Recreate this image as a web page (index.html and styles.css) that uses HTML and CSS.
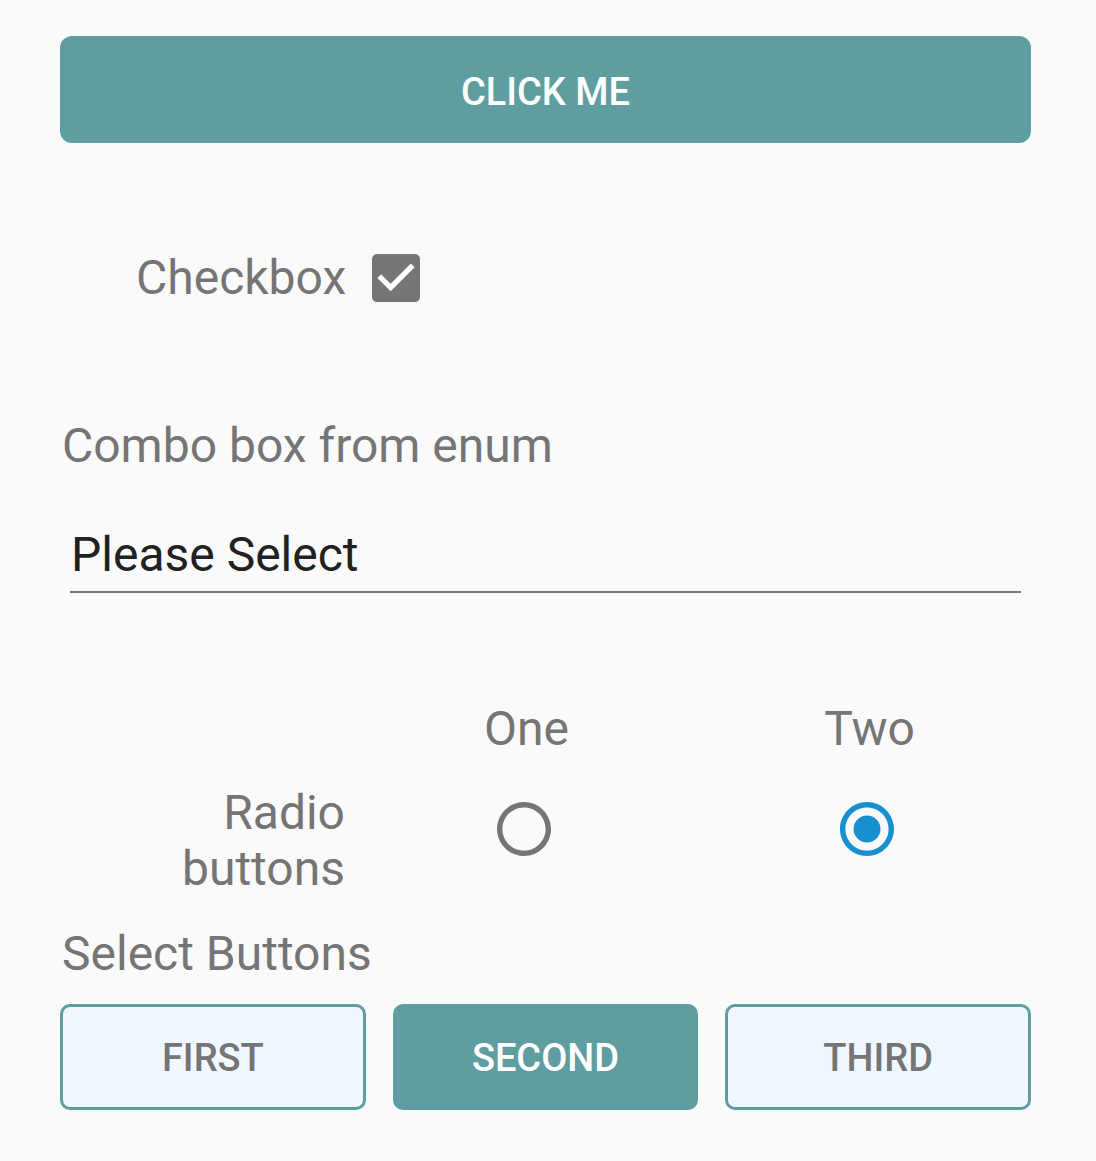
FILE: index.html
```html
<!DOCTYPE html>
<html>
<head>
<meta charset="utf-8">
<link rel="stylesheet" href="styles.css">
</head>
<body>
<main class="page">
  <button class="btn-primary">CLICK ME</button>

  <div class="check-row">
    <span class="label">Checkbox</span>
    <svg class="checkbox" viewBox="3 3 18 18" width="48" height="48">
      <path fill="#757575" d="M19 3H5c-1.11 0-2 .9-2 2v14c0 1.1.89 2 2 2h14c1.11 0 2-.9 2-2V5c0-1.1-.89-2-2-2z"/>
      <path fill="#ffffff" d="M10 17l-5-5 1.41-1.41L10 14.170l7.59-7.59L19 8l-9 9z"/>
    </svg>
  </div>

  <div class="combo-label label">Combo box from enum</div>
  <div class="combo">Please Select</div>

  <div class="radio-grid">
    <div></div>
    <div class="radio-head label">One</div>
    <div class="radio-head label">Two</div>
    <div class="radio-label label">Radio<br>buttons</div>
    <div class="radio-cell">
      <svg viewBox="2 2 20 20" width="54" height="54">
        <path fill="#757575" d="M12 2C6.48 2 2 6.48 2 12s4.48 10 10 10 10-4.480 10-10S17.52 2 12 2zm0 18c-4.42 0-8-3.58-8-8s3.58-8 8-8 8 3.58 8 8-3.58 8-8 8z"/>
      </svg>
    </div>
    <div class="radio-cell">
      <svg viewBox="2 2 20 20" width="54" height="54">
        <path fill="#1890d0" d="M12 2C6.48 2 2 6.48 2 12s4.48 10 10 10 10-4.48 10-10S17.52 2 12 2zm0 18c-4.42 0-8-3.58-8-8s3.58-8 8-8 8 3.58 8 8-3.58 8-8 8z"/>
        <circle fill="#1890d0" cx="12" cy="12" r="5"/>
      </svg>
    </div>
  </div>

  <div class="select-label label">Select Buttons</div>
  <div class="select-row">
    <button class="seg">FIRST</button>
    <button class="seg seg-on">SECOND</button>
    <button class="seg">THIRD</button>
  </div>
</main>
</body>
</html>
```

FILE: styles.css
```css
html, body {
  margin: 0;
  padding: 0;
  background: #fafafa;
}

body {
  font-family: Roboto, "Noto Sans", sans-serif;
}

.page {
  width: 971px;
  margin-left: 60px;
  padding-top: 36px;
  display: flex;
  flex-direction: column;
}

.label {
  font-size: 48px;
  line-height: 56px;
  color: #757575;
}

.btn-primary {
  height: 107px;
  border: none;
  border-radius: 12px;
  background: #5f9ea0;
  color: #ffffff;
  font-family: Roboto, sans-serif;
  font-weight: 500;
  font-size: 38px;
  padding: 5px 0 0 0;
}

.check-row {
  margin-top: 111px;
  padding-left: 76px;
  display: flex;
  align-items: center;
  gap: 26px;
  height: 48px;
}

.checkbox {
  display: block;
}

.combo-label {
  margin-top: 116px;
  padding-left: 2px;
}

.combo {
  margin: 53px 10px 0 10px;
  font-size: 48px;
  line-height: 56px;
  color: #212121;
  padding-left: 1px;
  padding-bottom: 8px;
  border-bottom: 2px solid #7a7a7a;
}

.radio-grid {
  margin-top: 108px;
  display: grid;
  grid-template-columns: 285px 1fr 1fr;
  align-items: start;
}

.radio-head {
  text-align: center;
  padding-left: 20px;
}

.radio-label {
  text-align: right;
  line-height: 56px;
  margin-top: 28px;
}

.radio-cell {
  display: flex;
  justify-content: center;
  padding-left: 14px;
  margin-top: 45px;
}

.radio-cell svg {
  display: block;
}

.select-label {
  margin-top: 29px;
  padding-left: 2px;
}

.select-row {
  margin-top: 22px;
  display: grid;
  grid-template-columns: 1fr 1fr 1fr;
  gap: 27px;
}

.seg {
  height: 106px;
  border: 3px solid #5f9ea0;
  border-radius: 10px;
  background: #f0f8ff;
  color: #757575;
  font-family: Roboto, sans-serif;
  font-weight: 500;
  font-size: 38px;
  padding: 2px 0 0 0;
}

.seg-on {
  background: #5f9ea0;
  color: #ffffff;
}
```
